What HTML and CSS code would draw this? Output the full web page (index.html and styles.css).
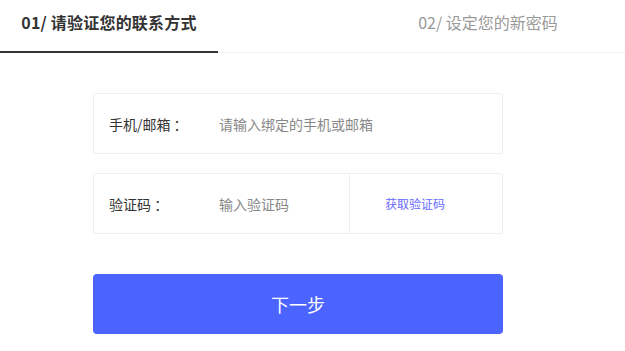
FILE: index.html
```html
<!DOCTYPE html>
<html lang="zh-CN">
<head>
  <meta charset="UTF-8" />
  <meta name="viewport" content="width=device-width, initial-scale=1.0"/>
  <title>找回密码</title>
  <link rel="stylesheet" href="styles.css">
</head>
<body>
  <div class="steps">
    <div class="step active">01/ 请验证您的联系方式</div>
    <div class="step next">02/ 设定您的新密码</div>
  </div>

  <form class="verify-form" onsubmit="return false;">
    <div class="field">
      <label for="account">手机/邮箱 ：</label>
      <input type="text" id="account" placeholder="请输入绑定的手机或邮箱">
    </div>
    <div class="field">
      <label for="code">验证码 ：</label>
      <input type="text" id="code" placeholder="输入验证码">
      <a href="#" class="get-code">获取验证码</a>
    </div>
    <button type="submit" class="next-button">下一步</button>
  </form>
</body>
</html>
```

FILE: styles.css
```css
:root {
  --primary-color: #4b63ff;
  --text-color: #333;
  --muted-color: #999;
  --line-color: #eee;
}

* {
  box-sizing: border-box;
}

body {
  margin: 0;
  font-family: "Noto Sans CJK SC", "Noto Sans", sans-serif;
  color: var(--text-color);
  background: #fff;
}

.steps {
  display: flex;
  height: 53px;
  border-bottom: 1px solid #f2f2f2;
}

.step {
  width: 218px;
  font-size: 16px;
  line-height: 44px;
  text-align: center;
}

.step.active {
  font-weight: bold;
  color: #333;
  border-bottom: 2px solid #333;
  height: 53px;
  letter-spacing: 0.2px;
}

.step.next {
  margin-left: 161px;
  color: #999;
}

.verify-form {
  width: 410px;
  margin: 40px auto 0 93px;
}

.field {
  display: flex;
  align-items: center;
  height: 61px;
  margin-bottom: 19px;
  border: 1px solid var(--line-color);
  border-radius: 3px;
  font-size: 14px;
}

.field label {
  width: 125px;
  padding-left: 15px;
  color: var(--text-color);
}

.field input {
  flex: 1;
  min-width: 0;
  height: 100%;
  border: none;
  outline: none;
  padding: 0;
  font-family: inherit;
  font-size: 14px;
  color: var(--text-color);
  background: transparent;
}

.field input::placeholder {
  color: #888;
}

.get-code {
  width: 153px;
  height: 100%;
  display: flex;
  align-items: center;
  padding-left: 35px;
  border-left: 1px solid var(--line-color);
  font-size: 12px;
  color: #6a6aff;
  text-decoration: none;
}

.next-button {
  display: block;
  width: 100%;
  height: 60px;
  margin-top: 40px;
  border: none;
  border-radius: 4px;
  background: var(--primary-color);
  color: #fff;
  font-family: inherit;
  font-size: 18px;
  cursor: pointer;
}
```
